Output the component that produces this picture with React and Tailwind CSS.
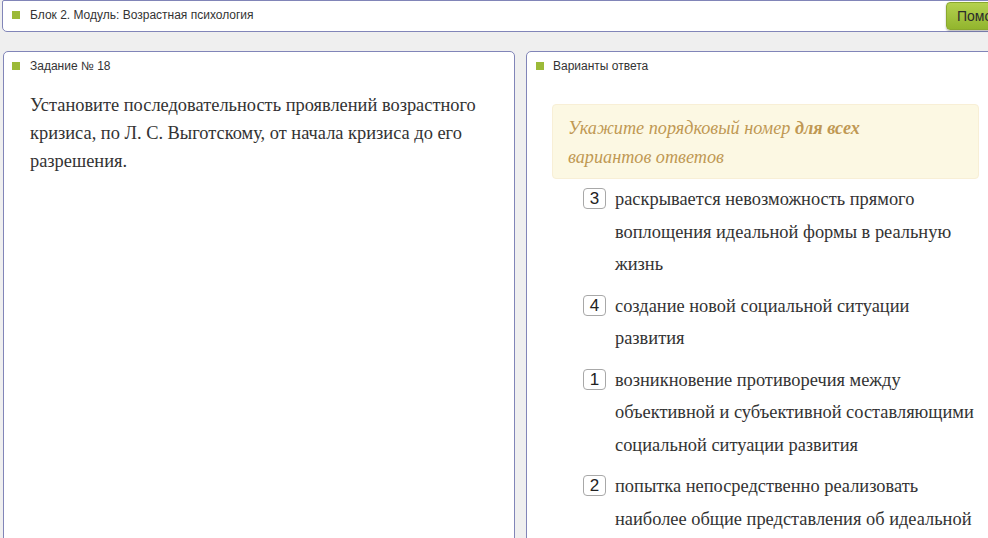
import React from "react";

const options = [
  { n: "3", lines: "раскрывается невозможность прямого воплощения идеальной формы в реальную жизнь" },
  { n: "4", lines: "создание новой социальной ситуации развития" },
  { n: "1", lines: "возникновение противоречия между объективной и субъективной составляющими социальной ситуации развития" },
  { n: "2", lines: "попытка непосредственно реализовать наиболее общие представления об идеальной форме" },
];

function Square() {
  return <span className="inline-block w-[8px] h-[8px] bg-[#9cba38] shrink-0" />;
}

export default function App() {
  return (
    <div className="w-[988px] h-[538px] overflow-hidden bg-[#efefef] relative" style={{ fontFamily: '"Liberation Sans", Arial, sans-serif' }}>
      <div className="w-[1100px] pl-[2px]">
        <div className="h-[32px] bg-white border border-[#8185b8] rounded-b-[5px] rounded-t-[2px] flex items-center pb-[2px]">
          <div className="flex items-center pl-[9px] gap-[10px] flex-1">
            <Square />
            <span className="text-[12px] text-[#333] leading-none">Блок 2. Модуль: Возрастная психология</span>
          </div>
        </div>
      </div>
      <div className="absolute left-[946px] top-[2px] h-[28px] w-[90px] rounded-[4px] border border-[#8aa82e] bg-gradient-to-b from-[#b4d14f] to-[#92b52d] text-[#2b2b2b] text-[14px] flex items-center pl-[10px] shadow-[0_1px_2px_rgba(0,0,0,0.3)]">
        Помощь
      </div>

      <div className="flex pl-[3px] pt-[19px] gap-[11px] w-[1100px]">
        <div className="w-[512px] h-[500px] bg-white border border-[#8185b8] rounded-t-[5px]">
          <div className="flex items-center pl-[8px] gap-[10px] h-[28px] pb-[1px]">
            <Square />
            <span className="text-[12px] text-[#333] leading-none">Задание № 18</span>
          </div>
          <div className="pl-[26px] pr-[20px] pt-[11px] text-[18.4px] leading-[28px] text-[#333]" style={{ fontFamily: '"Liberation Serif", "Times New Roman", serif' }}>
            Установите последовательность проявлений возрастного кризиса, по Л. С. Выготскому, от начала кризиса до его разрешения.
          </div>
        </div>

        <div className="w-[520px] h-[500px] bg-white border border-[#8185b8] rounded-t-[5px]">
          <div className="flex items-center pl-[9px] gap-[9px] h-[28px] pb-[1px]">
            <Square />
            <span className="text-[12px] text-[#333] leading-none">Варианты ответа</span>
          </div>
          <div style={{ fontFamily: '"Liberation Serif", "Times New Roman", serif' }}>
            <div className="ml-[25px] mt-[24px] w-[427px] bg-[#fcf8e3] border border-[#f8efd6] rounded-[4px] pl-[15px] pr-[10px] pt-[9px] pb-[6px] text-[18.2px] leading-[29px] italic text-[#c09853]">
              Укажите порядковый номер <b>для всех</b>
              <br />
              вариантов ответов
            </div>
            <div className="pl-[56px] pt-[4px] flex flex-col gap-[9px]">
              {options.map((o) => (
                <div key={o.n} className="flex items-start">
                  <div className="w-[23px] h-[21px] mt-[5px] shrink-0 border border-[#a8a8a8] rounded-[4px] flex items-center justify-center text-[17px] leading-none text-[#222] bg-white" style={{ fontFamily: '"Liberation Sans", Arial, sans-serif' }}>
                    {o.n}
                  </div>
                  <div className="ml-[9px] w-[362px] text-[18.4px] leading-[32.5px] text-[#333]">{o.lines}</div>
                </div>
              ))}
            </div>
          </div>
        </div>
      </div>
    </div>
  );
}
